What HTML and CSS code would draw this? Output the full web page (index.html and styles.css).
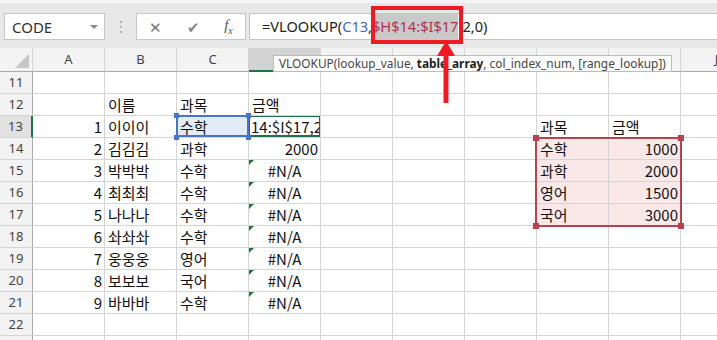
FILE: index.html
```html
<!DOCTYPE html>
<html>

<head lang="ko">
    <meta charset="UTF-8">
    <title>VLOOKUP</title>
    <link rel="stylesheet" href="styles.css">
</head>

<body>
    <div class="toolbar">
        <div class="namebox">CODE<span class="caret"></span></div>
        <div class="grip"></div>
        <div class="fxbtns">
            <span class="btn">&#x2715;</span>
            <span class="btn check">&#x2714;</span>
            <span class="btn fx">f<sub>x</sub></span>
        </div>
        <div class="formula">=VLOOKUP(<span class="ref1">C13</span>,<span class="ref2">$H$14:$I$17</span>,2,0)</div>
    </div>

    <div class="sheet">
        <div class="h corner"><span class="tri"></span></div>
        <div class="h">A</div><div class="h">B</div><div class="h">C</div><div class="h on">D</div><div class="h">E</div>
        <div class="h">F</div><div class="h">G</div><div class="h">H</div><div class="h">I</div><div class="h">J</div>

        <div class="r">11</div>
        <div class="c"></div><div class="c"></div><div class="c"></div><div class="c"></div><div class="c"></div>
        <div class="c"></div><div class="c"></div><div class="c"></div><div class="c"></div><div class="c"></div>

        <div class="r">12</div>
        <div class="c"></div><div class="c">이름</div><div class="c">과목</div><div class="c">금액</div><div class="c"></div>
        <div class="c"></div><div class="c"></div><div class="c"></div><div class="c"></div><div class="c"></div>

        <div class="r on">13</div>
        <div class="c n">1</div><div class="c">이이이</div><div class="c sel">수학</div><div class="c act">14:$I$17,2,0)</div><div class="c"></div>
        <div class="c"></div><div class="c"></div><div class="c">과목</div><div class="c">금액</div><div class="c"></div>

        <div class="r">14</div>
        <div class="c n">2</div><div class="c">김김김</div><div class="c">과학</div><div class="c n">2000</div><div class="c"></div>
        <div class="c"></div><div class="c"></div><div class="c pk">수학</div><div class="c pk n">1000</div><div class="c"></div>

        <div class="r">15</div>
        <div class="c n">3</div><div class="c">박박박</div><div class="c">수학</div><div class="c err">#N/A</div><div class="c"></div>
        <div class="c"></div><div class="c"></div><div class="c pk">과학</div><div class="c pk n">2000</div><div class="c"></div>

        <div class="r">16</div>
        <div class="c n">4</div><div class="c">최최최</div><div class="c">수학</div><div class="c err">#N/A</div><div class="c"></div>
        <div class="c"></div><div class="c"></div><div class="c pk">영어</div><div class="c pk n">1500</div><div class="c"></div>

        <div class="r">17</div>
        <div class="c n">5</div><div class="c">나나나</div><div class="c">수학</div><div class="c err">#N/A</div><div class="c"></div>
        <div class="c"></div><div class="c"></div><div class="c pk">국어</div><div class="c pk n">3000</div><div class="c"></div>

        <div class="r">18</div>
        <div class="c n">6</div><div class="c">솨솨솨</div><div class="c">수학</div><div class="c err">#N/A</div><div class="c"></div>
        <div class="c"></div><div class="c"></div><div class="c"></div><div class="c"></div><div class="c"></div>

        <div class="r">19</div>
        <div class="c n">7</div><div class="c">웅웅웅</div><div class="c">영어</div><div class="c err">#N/A</div><div class="c"></div>
        <div class="c"></div><div class="c"></div><div class="c"></div><div class="c"></div><div class="c"></div>

        <div class="r">20</div>
        <div class="c n">8</div><div class="c">보보보</div><div class="c">국어</div><div class="c err">#N/A</div><div class="c"></div>
        <div class="c"></div><div class="c"></div><div class="c"></div><div class="c"></div><div class="c"></div>

        <div class="r">21</div>
        <div class="c n">9</div><div class="c">바바바</div><div class="c">수학</div><div class="c err">#N/A</div><div class="c"></div>
        <div class="c"></div><div class="c"></div><div class="c"></div><div class="c"></div><div class="c"></div>

        <div class="r">22</div>
        <div class="c"></div><div class="c"></div><div class="c"></div><div class="c"></div><div class="c"></div>
        <div class="c"></div><div class="c"></div><div class="c"></div><div class="c"></div><div class="c"></div>

        <div class="r">23</div>
        <div class="c"></div><div class="c"></div><div class="c"></div><div class="c"></div><div class="c"></div>
        <div class="c"></div><div class="c"></div><div class="c"></div><div class="c"></div><div class="c"></div>

        <!-- range picked in the formula -->
        <div class="range"></div>
    </div>

    <div class="tip">VLOOKUP(lookup_value, <b>table_array</b>, col_index_num, [range_lookup])</div>

    <div class="mark"></div>
    <svg class="arrow" width="20" height="64" viewBox="0 0 20 64">
        <polygon points="10,1 1,16 19,16" fill="#ee1b24" />
        <rect x="7.5" y="15" width="5" height="48" fill="#ee1b24" />
    </svg>
</body>

</html>
```

FILE: styles.css
```css
body {
    margin: 0;
    width: 717px;
    height: 340px;
    overflow: hidden;
    position: relative;
    background-color: #fff;
    font-family: "Noto Sans", "Noto Sans CJK KR", sans-serif;
}

/* formula bar */

.toolbar {
    display: flex;
    height: 48px;
    box-sizing: border-box;
    padding-top: 10px;
    background-color: #e8e8e8;
    border-top: 3px solid #f4f4f4;
}

.namebox {
    margin-left: 4px;
    width: 101px;
    height: 27px;
    box-sizing: border-box;
    border: 1px solid #c6c6c6;
    background-color: #fff;
    display: flex;
    align-items: center;
    justify-content: space-between;
    padding: 0 6px 0 7px;
    font-size: 15px;
    color: #333;
}

.caret {
    width: 0;
    height: 0;
    border-left: 4px solid transparent;
    border-right: 4px solid transparent;
    border-top: 4px solid #888;
}

.grip {
    width: 31px;
    height: 27px;
    position: relative;
}

.grip:before {
    content: "";
    position: absolute;
    left: 15px;
    top: 8px;
    width: 2px;
    height: 2px;
    background-color: #b0b0b0;
    box-shadow: 0 5px #b0b0b0, 0 10px #b0b0b0;
}

.fxbtns {
    width: 110px;
    height: 27px;
    box-sizing: border-box;
    border: 1px solid #c6c6c6;
    background-color: #fff;
    display: flex;
    align-items: center;
    justify-content: space-around;
    color: #777;
    font-size: 15px;
}

.btn.check {
    color: #8a8a8a;
}

.btn.fx {
    font-family: "Liberation Serif", serif;
    font-style: italic;
    font-size: 15px;
    color: #555;
}

.btn.fx sub {
    font-size: 10px;
}

.formula {
    flex: 1;
    height: 27px;
    margin-left: 3px;
    box-sizing: border-box;
    border: 1px solid #c6c6c6;
    border-right: none;
    background-color: #fff;
    padding-left: 12px;
    font-size: 14.6px;
    line-height: 25px;
    color: #222;
    white-space: nowrap;
}

.ref1 {
    color: #3a6cc0;
}

.ref2 {
    display: inline-block;
    color: #b03450;
    background-color: #c9c9c9;
}

/* grid */

.sheet {
    position: relative;
    display: grid;
    grid-template-columns: 33px repeat(10, 72px);
    grid-template-rows: 24px;
    grid-auto-rows: 22px;
    font-family: "Noto Sans CJK KR", sans-serif;
}

.h,
.r,
.c {
    box-sizing: border-box;
    border-right: 1px solid #d4d4d4;
    border-bottom: 1px solid #d4d4d4;
    white-space: nowrap;
    overflow: hidden;
}

.h {
    background-color: #f3f3f3;
    border-bottom-color: #ababab;
    text-align: center;
    font-family: "Noto Sans", sans-serif;
    font-size: 13px;
    line-height: 23px;
    color: #444;
}

.h.on {
    background-color: #d3d3d3;
    border-bottom: 2px solid #217346;
}

.corner {
    position: relative;
}

.tri {
    position: absolute;
    right: 3px;
    bottom: 3px;
    width: 0;
    height: 0;
    border-left: 14px solid transparent;
    border-bottom: 14px solid #c6c6c6;
}

.r {
    background-color: #f3f3f3;
    border-right-color: #ababab;
    text-align: center;
    font-family: "Noto Sans", sans-serif;
    font-size: 13px;
    line-height: 21px;
    color: #444;
}

.r.on {
    background-color: #e1e1e1;
    border-right: 2px solid #217346;
}

.c {
    padding: 0 3px;
    font-size: 15px;
    line-height: 21px;
    color: #111;
}

.c.n {
    text-align: right;
    padding-right: 2px;
}

.c.err {
    position: relative;
    text-align: center;
}

.c.err:before {
    content: "";
    position: absolute;
    left: 0;
    top: 0;
    border-top: 5px solid #1e7a3a;
    border-right: 5px solid transparent;
}

.c.pk {
    background-color: #fae8e8;
}

.c.sel {
    position: relative;
    overflow: visible;
    background-color: #e3ebf7;
}

.c.sel:before {
    content: "";
    position: absolute;
    left: -1px;
    top: -1px;
    right: -1px;
    bottom: 0;
    border: 2px solid #4a74c4;
}

.c.sel:after {
    content: "";
    position: absolute;
    left: -3px;
    top: -3px;
    width: 5px;
    height: 5px;
    background-color: #4a74c4;
    box-shadow: 72px 0 #4a74c4, 0 22px #4a74c4, 72px 22px #4a74c4;
    z-index: 2;
}

.c.act {
    position: relative;
    padding-left: 2px;
    z-index: 1;
}

.c.act:before {
    content: "";
    position: absolute;
    left: -1px;
    top: -1px;
    right: -1px;
    bottom: 0;
    border: 2px solid #217346;
}

.range {
    position: absolute;
    left: 535px;
    top: 89px;
    width: 147px;
    height: 90px;
    box-sizing: border-box;
    border: 2px solid #b6424f;
}

.range:after {
    content: "";
    position: absolute;
    left: -4px;
    top: -4px;
    width: 6px;
    height: 6px;
    background-color: #b6424f;
    box-shadow: 145px 0 #b6424f, 0 88px #b6424f, 145px 88px #b6424f;
}

/* popup + callout */

.tip {
    position: absolute;
    left: 273px;
    top: 55px;
    height: 17px;
    box-sizing: border-box;
    padding: 0 5px;
    border: 1px solid #bcbcbc;
    background-color: #fff;
    font-size: 11.85px;
    line-height: 15px;
    color: #444;
    white-space: nowrap;
    z-index: 3;
}

.tip b {
    color: #222;
}

.mark {
    position: absolute;
    left: 371px;
    top: 6px;
    width: 92px;
    height: 38px;
    box-sizing: border-box;
    border: 4px solid #ee1b24;
    z-index: 4;
}

.arrow {
    position: absolute;
    left: 436px;
    top: 40px;
    z-index: 4;
}
```
